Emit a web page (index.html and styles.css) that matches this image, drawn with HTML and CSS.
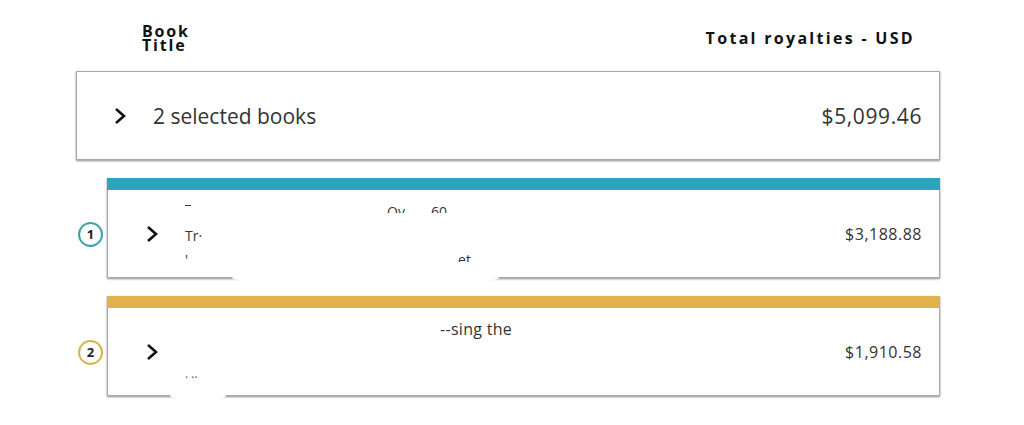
FILE: index.html
```html
<!DOCTYPE html>
<html>
<head>
<meta charset="utf-8">
<link rel="stylesheet" href="styles.css">
</head>
<body>
<div class="page">
  <div class="head">
    <div class="head-title"><div>Book</div><div>Title</div></div>
    <div class="head-total">Total royalties - USD</div>
  </div>

  <div class="summary">
    <svg class="chev chev-lg" viewBox="0 0 14 18"><path d="M3 2 L11 9 L3 16" fill="none" stroke="#111" stroke-width="2.6" stroke-linejoin="miter"/></svg>
    <span class="summary-text">2 selected books</span>
    <span class="summary-amt">$5,099.46</span>
  </div>

  <div class="row">
    <div class="rank"><span class="badge badge-teal">1</span></div>
    <div class="card">
      <div class="bar bar-teal"></div>
      <div class="card-body">
        <svg class="chev chev-sm" viewBox="0 0 12 18"><path d="M2 2 L10 9 L2 16" fill="none" stroke="#111" stroke-width="2.6"/></svg>
        <div class="title">
          <div class="tl tl1"><span class="f clip-top f-a">‾</span><span class="f clip-top f-b">Ov</span><span class="f clip-top f-c">60</span></div>
          <div class="tl tl2"><span class="f">Tr</span><span class="f clip-top">·</span></div>
          <div class="tl tl3"><span class="f clip-top">'</span><span class="f clip-top f-d">et</span></div>
        </div>
        <span class="amt">$3,188.88</span>
      </div>
      <div class="blot blot-1"></div>
    </div>
  </div>

  <div class="row">
    <div class="rank"><span class="badge badge-gold">2</span></div>
    <div class="card">
      <div class="bar bar-gold"></div>
      <div class="card-body">
        <svg class="chev chev-sm" viewBox="0 0 12 18"><path d="M2 2 L10 9 L2 16" fill="none" stroke="#111" stroke-width="2.6"/></svg>
        <div class="title">
          <div class="tl tl1"><span class="f f-e">--sing the</span></div>
          <div class="tl tl2"><span class="f">&nbsp;</span></div>
          <div class="tl tl3"><span class="f f-dots">· ··</span></div>
        </div>
        <span class="amt">$1,910.58</span>
      </div>
      <div class="blot blot-2"></div>
    </div>
  </div>
</div>
</body>
</html>
```

FILE: styles.css
```css
* { box-sizing: border-box; }
html, body { margin: 0; padding: 0; background: #fff; }
body {
  width: 1024px;
  height: 425px;
  overflow: hidden;
  font-family: "Open Sans", "Noto Sans", sans-serif;
  color: #222;
}
.page {
  margin-left: 76px;
  width: 864px;
  padding-top: 22px;
}
.head {
  display: flex;
  justify-content: space-between;
  align-items: flex-start;
  height: 49px;
  padding-left: 66px;
  padding-right: 25px;
}
.head-title {
  font-weight: 700;
  font-size: 16px;
  line-height: 14px;
  letter-spacing: 1.8px;
  color: #111;
  padding-top: 2px;
}
.head-total {
  font-weight: 700;
  font-size: 16px;
  letter-spacing: 2.3px;
  color: #111;
  line-height: 20px;
  margin-top: 6px;
}
.summary {
  display: flex;
  align-items: center;
  height: 89px;
  border: 1px solid #a8a8a8;
  box-shadow: 0 1px 2px rgba(0,0,0,0.45);
  padding-left: 36px;
  padding-right: 17px;
}
.chev { display: block; flex: none; }
.chev-lg { width: 14px; height: 18px; }
.summary-text {
  margin-left: 26px;
  font-size: 21px;
  color: #333;
}
.summary-amt {
  margin-left: auto;
  font-size: 21px;
  letter-spacing: 0.6px;
  color: #333;
}
.row {
  display: flex;
  margin-top: 18px;
}
.rank {
  width: 31px;
  flex: none;
  display: flex;
  align-items: center;
  padding-top: 12px;
}
.badge {
  width: 25px;
  height: 25px;
  border-radius: 50%;
  border: 2px solid;
  display: flex;
  align-items: center;
  justify-content: center;
  font-size: 13px;
  font-weight: 700;
  color: #222;
  margin-left: 2px;
}
.badge-teal { border-color: #3aa3ae; }
.badge-gold { border-color: #d8b44e; }
.card {
  position: relative;
  flex: 1;
  box-shadow: 0 1px 2px rgba(0,0,0,0.45);
  border-left: 1px solid #a8a8a8;
  border-right: 1px solid #a8a8a8;
  border-bottom: 1px solid #a8a8a8;
}
.bar { height: 12px; margin: 0 -1px; }
.bar-teal { background: #2ba5bb; }
.bar-gold { background: #e1b24c; }
.card-body {
  display: flex;
  align-items: center;
  height: 87px;
  padding-left: 38px;
  padding-right: 17px;
}
.chev-sm { width: 12px; height: 18px; }
.title {
  margin-left: 27px;
  font-size: 14px;
  color: #333;
  display: flex;
  flex-direction: column;
  gap: 5px;
  padding-top: 3px;
}
.tl { display: flex; height: 19px; line-height: 19px; }
.f { display: block; }
.clip-top { height: 11px; overflow: hidden; }
.tl3 .clip-top { height: 12px; }
.f-a { width: 6px; }
.f-b { margin-left: 196px; }
.f-c { margin-left: 26px; }
.f-d { margin-left: 270px; }
.f-e { margin-left: 255px; font-size: 16px; letter-spacing: 0.3px; }
.f-dots { font-size: 12px; color: #555; }
.amt {
  margin-left: auto;
  font-size: 16px;
  letter-spacing: 0.5px;
  color: #333;
}
.blot {
  position: absolute;
  background: #fff;
  border-radius: 50%;
}
.blot-1 { left: 124px; width: 267px; height: 14px; bottom: -8px; }
.blot-2 { left: 62px; width: 56px; height: 8px; bottom: -5px; }
```
